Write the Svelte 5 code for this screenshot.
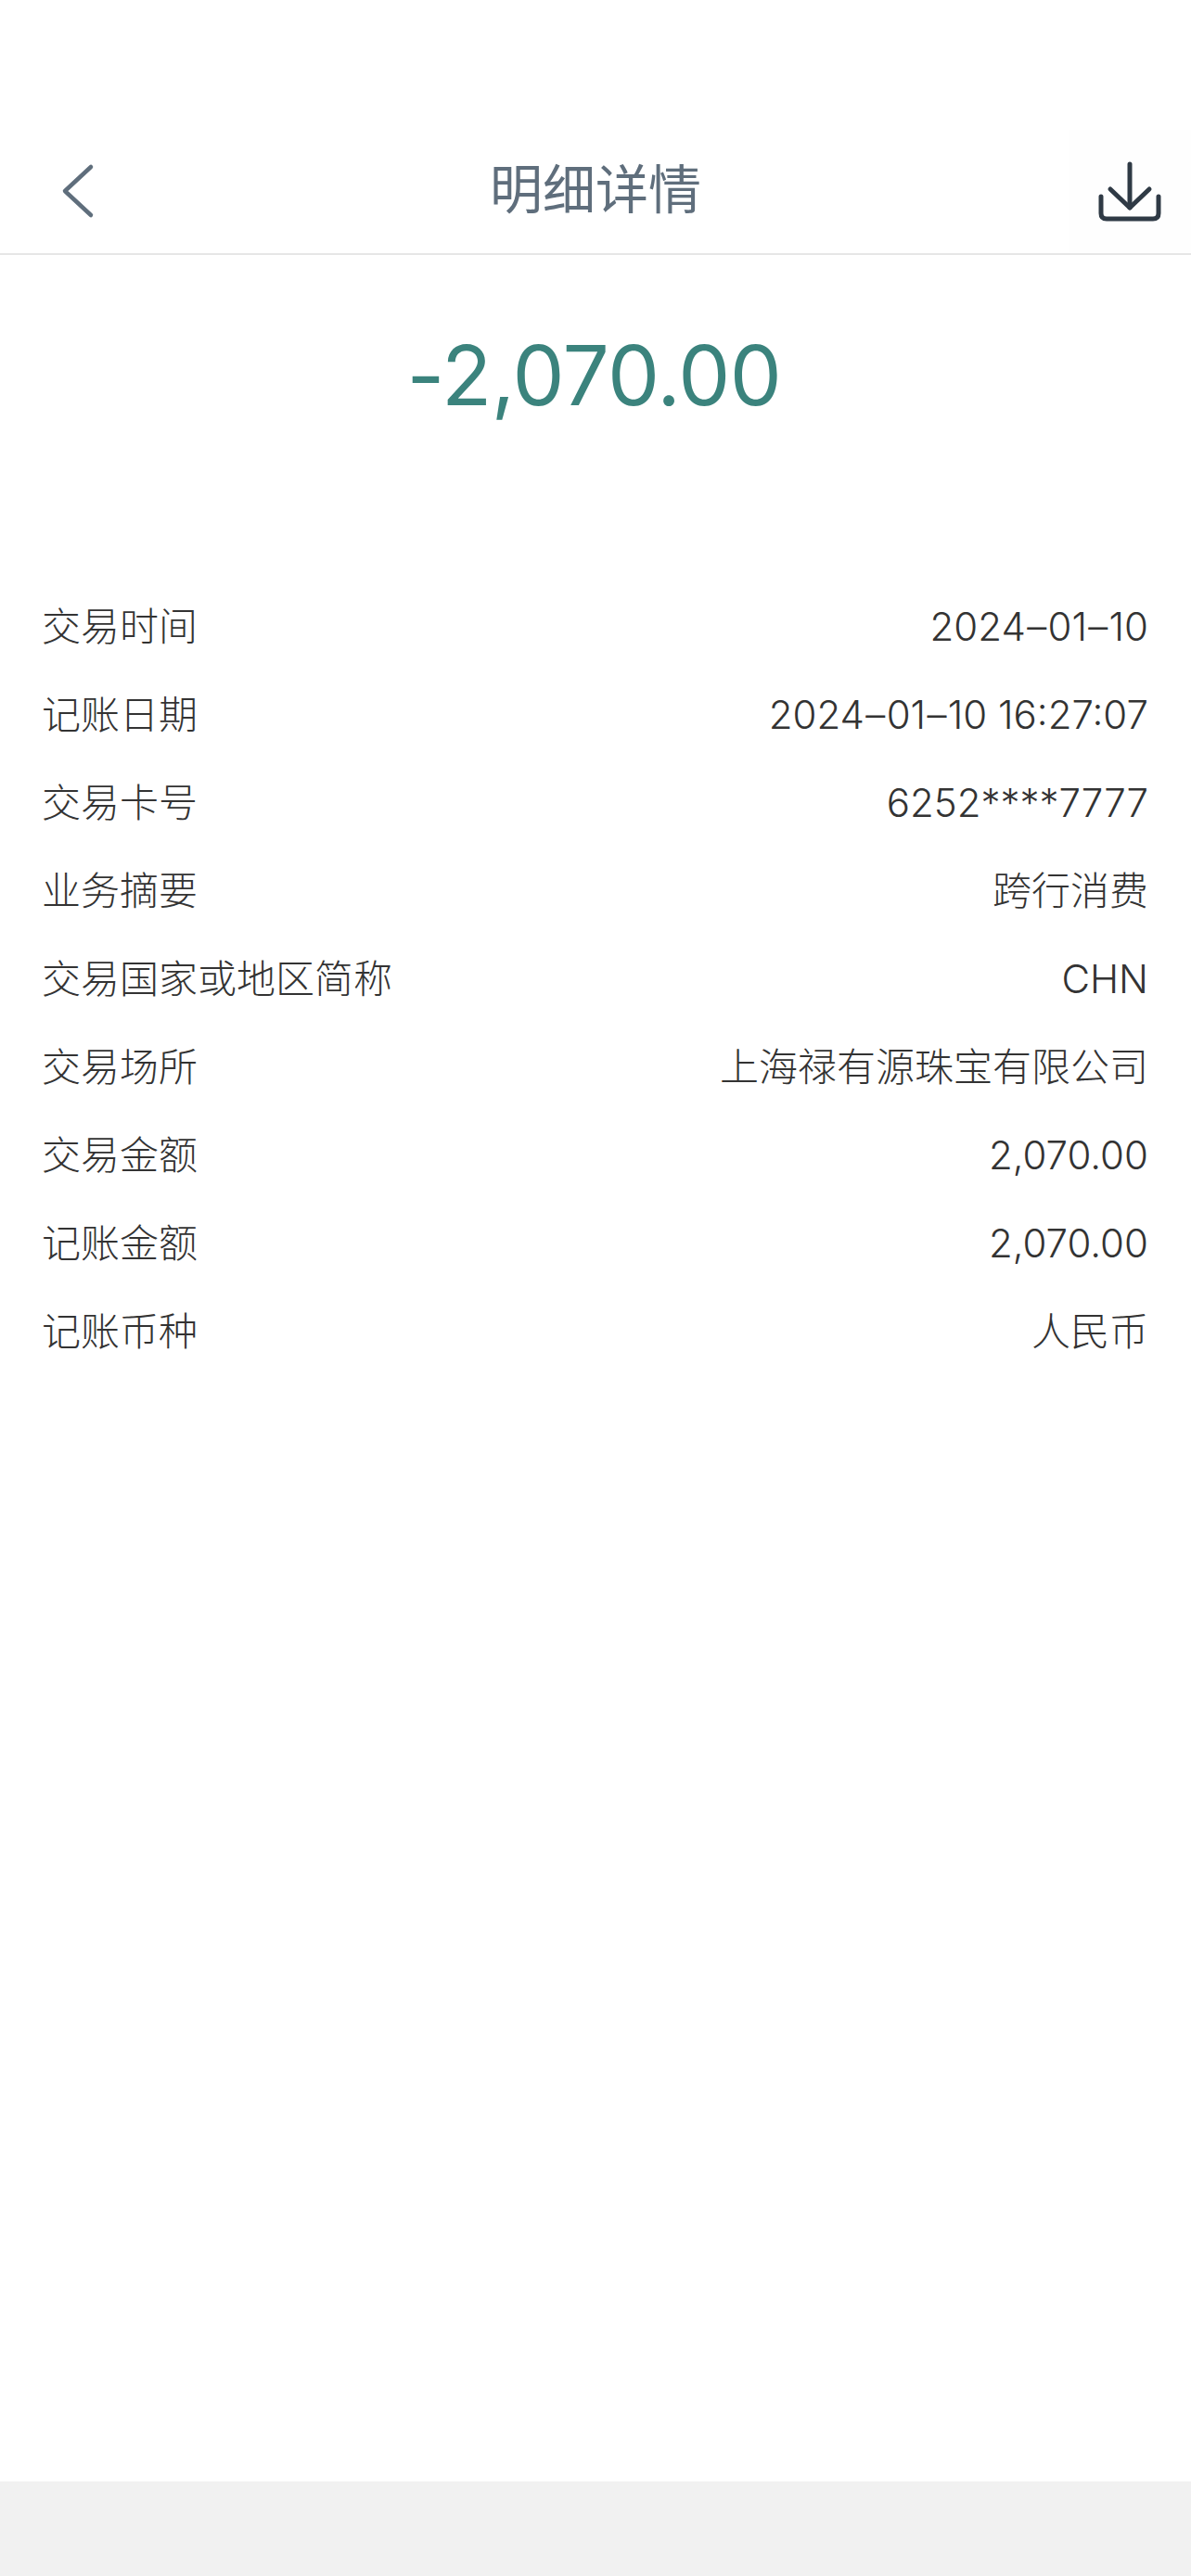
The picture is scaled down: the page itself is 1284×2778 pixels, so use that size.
<script>
  const rows = [
    ['交易时间', '2024–01–10'],
    ['记账日期', '2024–01–10 16:27:07'],
    ['交易卡号', '6252****7777'],
    ['业务摘要', '跨行消费'],
    ['交易国家或地区简称', 'CHN'],
    ['交易场所', '上海禄有源珠宝有限公司'],
    ['交易金额', '2,070.00'],
    ['记账金额', '2,070.00'],
    ['记账币种', '人民币']
  ];
</script>

<div class="page">
  <header class="nav">
    <button class="back" aria-label="返回">
      <svg width="40" height="60" viewBox="0 0 40 60"><path d="M34 4 L6 30 L34 56" fill="none" stroke="#5f6e7c" stroke-width="4.5" stroke-linecap="round" stroke-linejoin="round"/></svg>
    </button>
    <h1>明细详情</h1>
    <button class="save" aria-label="下载">
      <svg width="68" height="66" viewBox="0 0 68 66"><g fill="none" stroke="#2f3a45" stroke-width="5" stroke-linecap="round" stroke-linejoin="round"><path d="M34 3 V50"/><path d="M13 30 L34 50 L55 30"/><path d="M3 38 V56 Q3 62 9 62 H59 Q65 62 65 56 V38"/></g></svg>
    </button>
  </header>
  <div class="amount">-2,070.00</div>
  <dl class="list">
    {#each rows as [k, v]}
      <div class="row"><dt>{k}</dt><dd>{#each v.split('–') as part, i}{#if i}<span class="dash">–</span>{/if}{part}{/each}</dd></div>
    {/each}
  </dl>
  <div class="spacer"></div>
  <div class="foot"></div>
</div>

<style>
  :global(body) { margin: 0; background: #fff; }
  .page {
    height: 2778px; display: flex; flex-direction: column;
    font-family: Inter, "Noto Sans CJK SC", sans-serif; background: #fff;
  }
  .nav {
    margin-top: 140px; height: 133px; border-bottom: 2px solid #e6e6e6;
    display: flex; align-items: center; justify-content: space-between; position: relative;
  }
  button { border: 0; padding: 0; background: none; display: flex; }
  .back { margin-left: 64px; margin-top: -2px; }
  .save { width: 132px; height: 133px; background: #fefefe; align-items: center; justify-content: center; }
  h1 {
    position: absolute; left: 0; right: 0; top: 0; margin: 0; text-align: center;
    line-height: 130px; font-size: 57px; font-weight: 400; color: #5f6e7c;
  }
  .amount {
    margin-top: 75px; padding-right: 3px; text-align: center; font-size: 89px; line-height: 110px;
    font-weight: 400; color: #3b837d; letter-spacing: -0.5px;
  }
  .list { margin: 168px 46px 0 45px; padding: 0; }
  .row {
    display: flex; justify-content: space-between; align-items: center;
    height: 95px; font-size: 42px; color: #333;
  }
  dt, dd { margin: 0; font-weight: 300; line-height: 50px; }
  .dash { margin: 0 1.3px; }
  .spacer { flex: 1; }
  .foot { height: 102px; background: #f1f1f1; }
</style>
